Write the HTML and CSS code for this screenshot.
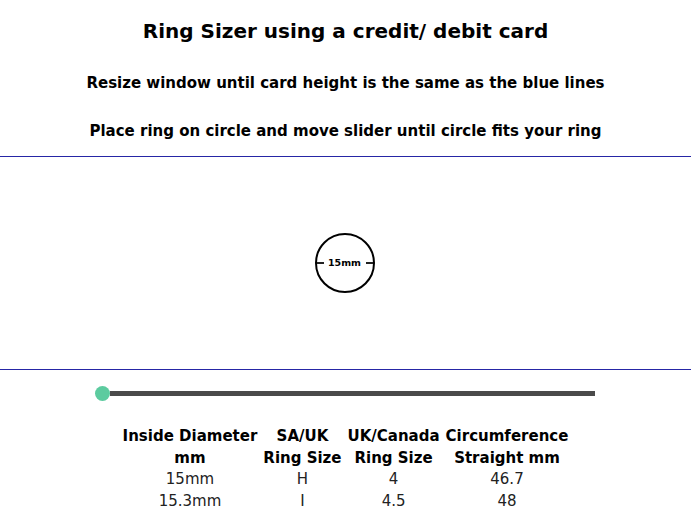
FILE: index.html
```html
<!DOCTYPE html>
<html>
<head>
<meta charset="utf-8">
<link rel="stylesheet" href="styles.css">
</head>
<body>
<h1 class="title">Ring Sizer using a credit/ debit card</h1>
<p class="note note-first">Resize window until card height is the same as the blue lines</p>
<p class="note note-second">Place ring on circle and move slider until circle fits your ring</p>
<div class="card-area">
  <div class="ring">
    <span class="dash"></span>
    <span class="ring-label">15mm</span>
    <span class="dash"></span>
  </div>
</div>
<div class="slider">
  <span class="thumb"></span>
  <span class="track"></span>
</div>
<table class="sizes">
  <thead>
    <tr><th>Inside Diameter<br>mm</th><th>SA/UK<br>Ring Size</th><th>UK/Canada<br>Ring Size</th><th>Circumference<br>Straight mm</th></tr>
  </thead>
  <tbody>
    <tr><td>15mm</td><td>H</td><td>4</td><td>46.7</td></tr>
    <tr><td>15.3mm</td><td>I</td><td>4.5</td><td>48</td></tr>
  </tbody>
</table>
</body>
</html>
```
FILE: styles.css
```css
html, body {
  margin: 0;
  padding: 0;
  background: #fff;
}
body {
  font-family: "DejaVu Sans", Verdana, sans-serif;
  color: #000;
  overflow: hidden;
}
.title {
  margin: 0;
  padding-top: 18px;
  font-size: 20px;
  line-height: 26px;
  text-align: center;
  font-weight: bold;
}
.note {
  margin: 0;
  font-size: 15px;
  line-height: 20px;
  font-weight: bold;
  text-align: center;
}
.note-first {
  margin-top: 29px;
}
.note-second {
  margin-top: 28px;
}
.card-area {
  margin-top: 15px;
  height: 212px;
  border-top: 1px solid #2626a6;
  border-bottom: 1px solid #2626a6;
  display: flex;
  align-items: center;
  justify-content: center;
}
.ring {
  width: 56px;
  height: 56px;
  border: 2px solid #000;
  border-radius: 50%;
  display: flex;
  align-items: center;
  justify-content: space-between;
  margin-left: -2px;
}
.dash {
  width: 7px;
  height: 2px;
  background: #222;
}
.ring-label {
  font-size: 9.5px;
  font-weight: bold;
  line-height: 12px;
}
.slider {
  margin-top: 16px;
  margin-left: 95px;
  width: 500px;
  height: 15px;
  display: flex;
  align-items: center;
}
.thumb {
  width: 15px;
  height: 15px;
  border-radius: 50%;
  background: #5ccb9f;
  flex: none;
}
.track {
  flex: 1;
  height: 5px;
  background: #4a4a4a;
}
.sizes {
  margin: 25px auto 0;
  border-collapse: collapse;
  font-size: 15px;
  line-height: 21.5px;
}
.sizes th {
  font-weight: bold;
  padding: 0 3px;
  text-align: center;
}
.sizes td {
  padding: 0 3px;
  text-align: center;
  color: #222;
}
```
